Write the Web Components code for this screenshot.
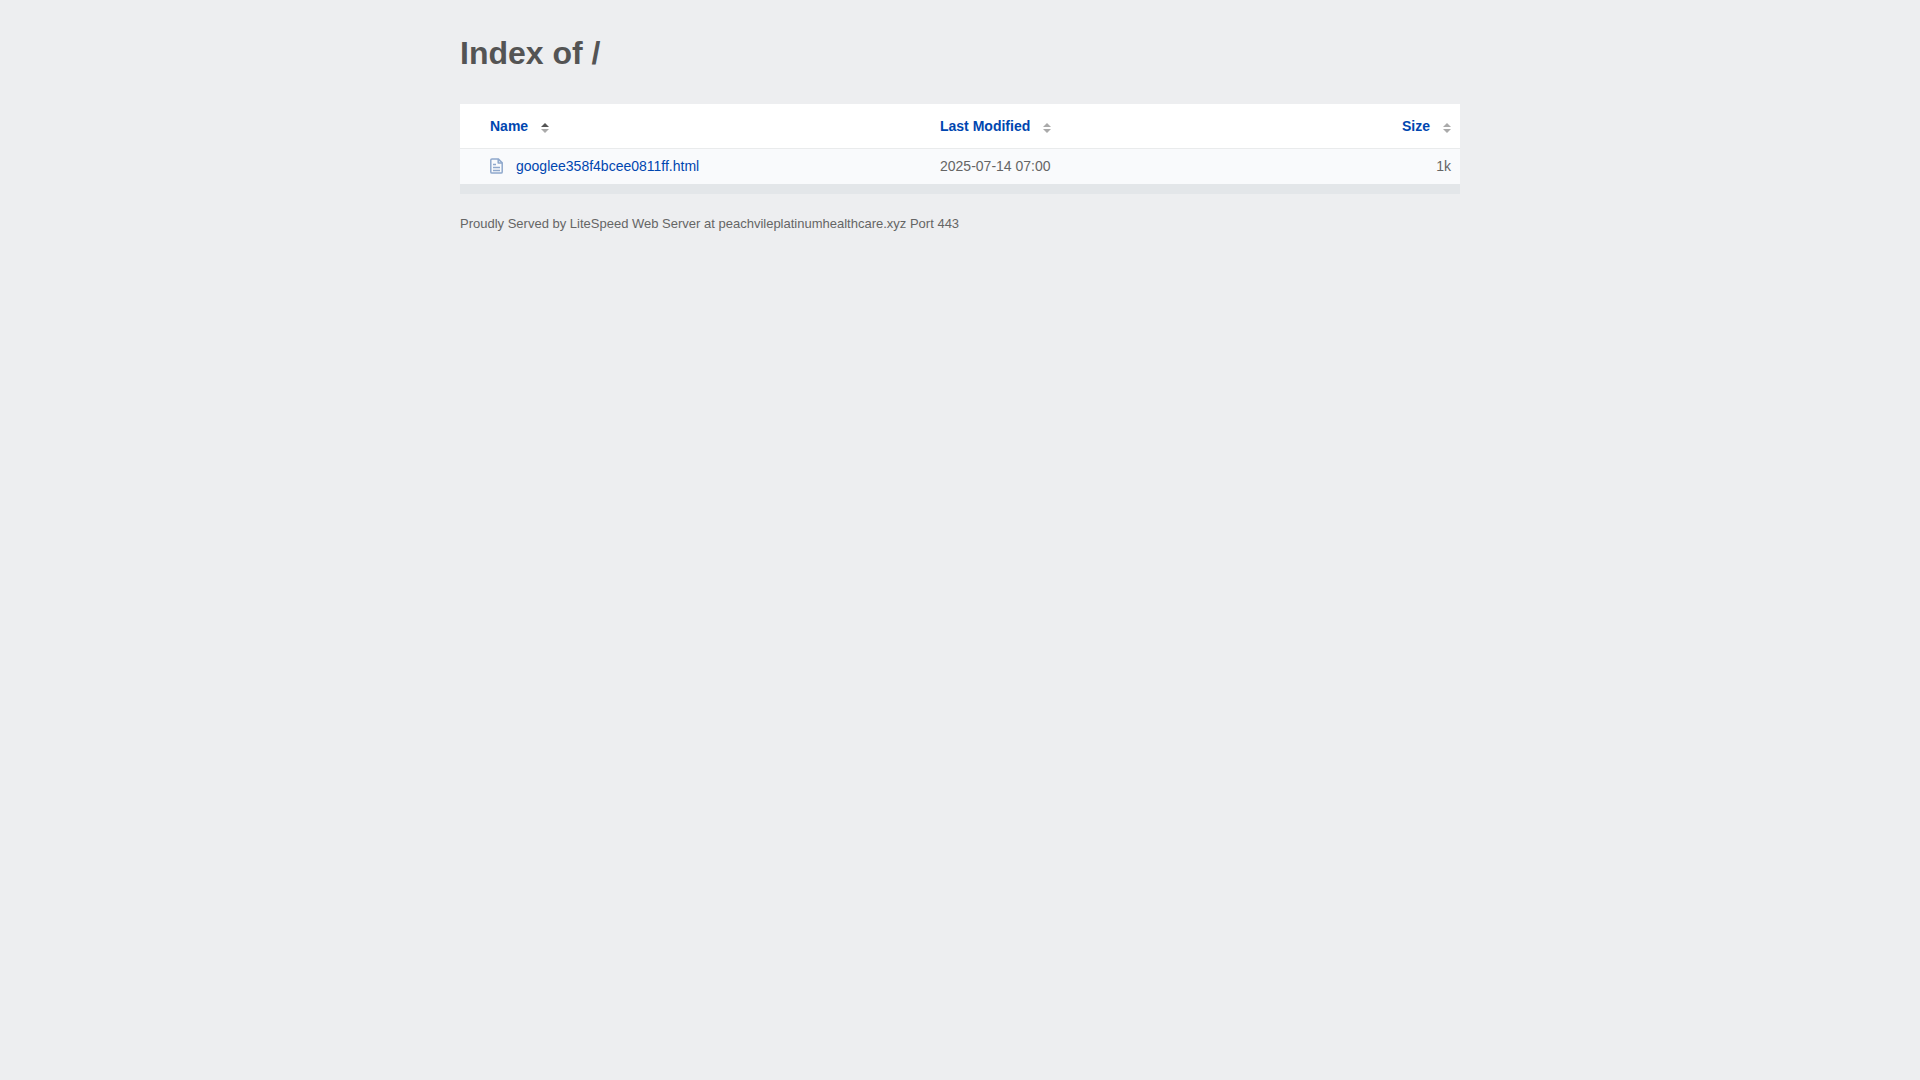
<!DOCTYPE html>
<html lang="en">
<head>
<meta charset="utf-8">
<meta name="viewport" content="width=device-width, initial-scale=1">
<title>Index of /</title>
<style>
  body {
    margin: 0;
    background: #edeef0;
    color: #656565;
    font: 14px/20px "Liberation Sans", Arial, sans-serif;
  }
</style>
</head>
<body>
<index-page heading="Index of /">
  <file-table></file-table>
  <span slot="footer">Proudly Served by LiteSpeed Web Server at peachvileplatinumhealthcare.xyz Port 443</span>
</index-page>

<script>
class IndexPage extends HTMLElement {
  connectedCallback() {
    this.attachShadow({ mode: 'open' });
    this.shadowRoot.innerHTML = `
      <style>
        :host {
          display: block;
          box-sizing: border-box;
          max-width: 1040px;
          margin: 0 auto;
          padding: 32px 20px;
        }

        h1 {
          margin: 0 0 30px;
          color: #545454;
          font-size: 32px;
          line-height: 42px;
        }

        footer {
          margin-top: 20px;
          font-size: 13px;
        }
      </style>
      <h1></h1>
      <slot></slot>
      <footer><slot name="footer"></slot></footer>
    `;

    this.shadowRoot.querySelector('h1').textContent = this.getAttribute('heading');
  }
}

class SortArrows extends HTMLElement {
  connectedCallback() {
    this.attachShadow({ mode: 'open' });
    this.shadowRoot.innerHTML = `
      <style>
        :host {
          display: inline-block;
          margin-left: 13px;
          color: #aaa;
        }

        svg {
          display: block;
        }

        :host([sorted="asc"]) .up {
          fill: #545454;
        }
      </style>
      <svg width="8" height="10" viewBox="0 0 8 10" fill="currentColor" aria-hidden="true">
        <path class="up" d="M4 0 8 4H0z"/>
        <path d="M0 6h8L4 10z"/>
      </svg>
    `;
  }
}

class FileIcon extends HTMLElement {
  connectedCallback() {
    this.attachShadow({ mode: 'open' });
    this.shadowRoot.innerHTML = `
      <style>
        :host {
          display: inline-block;
          color: #8fa8cc;
        }

        svg {
          display: block;
        }
      </style>
      <svg width="13" height="16" viewBox="0 0 13 16" fill="none" stroke="currentColor" stroke-width="1.5" stroke-linejoin="round" aria-hidden="true">
        <path d="M8.2.9H2Q.8.9.8 2.100v11.800Q.8 15.100 2 15.100h9q1.200 0 1.200-1.200V4.900z"/>
        <path d="M8.200.9v4h4"/>
        <path d="M3 6.500h3M3 9.500h7M3 12.500h7"/>
      </svg>
    `;
  }
}

class FileTable extends HTMLElement {
  connectedCallback() {
    this.attachShadow({ mode: 'open' });
    this.shadowRoot.innerHTML = `
      <style>
        :host {
          display: block;
        }

        table {
          width: 100%;
          table-layout: fixed;
          border-collapse: separate;
          border-spacing: 0;
          border-bottom: 10px solid #e3e6e9;
          background: #fff;
        }

        th, td {
          padding: 7px 9px 8px 10px;
          text-align: left;
        }

        th {
          padding-top: 12px;
          padding-bottom: 12px;
          border-bottom: 1px solid #e9ebec;
        }

        td {
          background: #f9fafc;
        }

        .name {
          width: 47%;
          padding-left: 30px;
          box-sizing: border-box;
        }

        .size {
          width: 15%;
          text-align: right;
        }

        a {
          display: inline-flex;
          align-items: center;
          color: #0046b0;
          text-decoration: none;
          vertical-align: top;
        }

        a:hover {
          text-decoration: underline;
        }

        sort-arrows {
          padding-top: 3px;
        }

        file-icon {
          margin-right: 13px;
        }
      </style>
      <table>
        <thead>
          <tr>
            <th class="name" aria-sort="ascending"><a href="#name">Name<sort-arrows sorted="asc"></sort-arrows></a></th>
            <th><a href="#modified">Last Modified<sort-arrows></sort-arrows></a></th>
            <th class="size"><a href="#size">Size<sort-arrows></sort-arrows></a></th>
          </tr>
        </thead>
        <tbody>
          <tr>
            <td class="name"><a href="googlee358f4bcee0811ff.html"><file-icon></file-icon>googlee358f4bcee0811ff.html</a></td>
            <td>2025-07-14 07:00</td>
            <td class="size">1k</td>
          </tr>
        </tbody>
      </table>
    `;
  }
}

customElements.define('sort-arrows', SortArrows);
customElements.define('file-icon', FileIcon);
customElements.define('file-table', FileTable);
customElements.define('index-page', IndexPage);
</script>
</body>
</html>
